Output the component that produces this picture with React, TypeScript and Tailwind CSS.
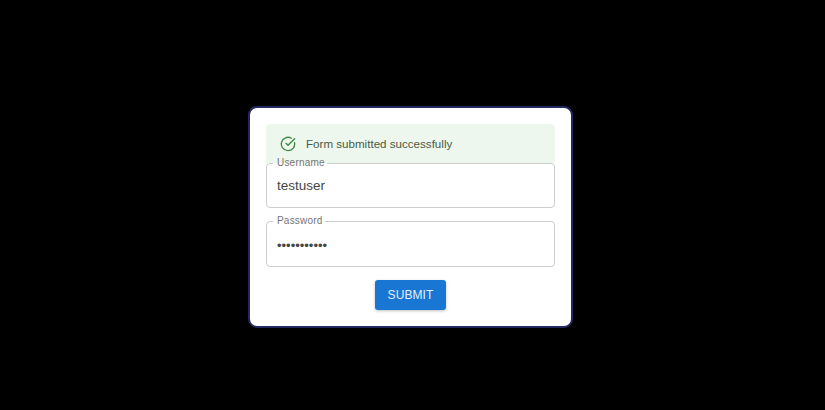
import { CircleCheckBig } from 'lucide-react';

function Field({ label, value, legendWidth, height, valueClass }: { label: string; value: string; legendWidth: string; height: string; valueClass: string }) {
  return (
    <fieldset className={`${height} rounded-[4px] border border-[#cdcdcd]`}>
      <legend className={`ml-[6px] h-[12px] ${legendWidth} px-[4px] text-[10px] leading-[11px] tracking-[0.2px] text-[#767676]`}>
        {label}
      </legend>
      <div className={`${valueClass} pl-[10px] leading-[27px] text-[#454545]`}>{value}</div>
    </fieldset>
  );
}

export default function App() {
  return (
    <div className="h-[410px] w-[825px] overflow-hidden bg-black pl-[248px] pt-[106px] font-['Liberation_Sans',sans-serif]">
      <div className="flex h-[222px] w-[325px] flex-col rounded-[9px] border-2 border-[#23295f] bg-white px-[16px] pt-[16px]">
        <div className="flex h-[39px] w-[289px] items-center rounded-t-[4px] bg-[#edf7ed] pl-[14px]">
          <CircleCheckBig size={16} strokeWidth={2} className="text-[#3f8a43]" />
          <span className="ml-[10px] text-[11.6px] text-[#4a5a46]">Form submitted successfully</span>
        </div>
        <div className="-mt-[6px] flex w-[289px] flex-col gap-[7px]">
          <Field label="Username" value="testuser" legendWidth="w-[54px]" height="h-[51px]" valueClass="mt-[3px] text-[13.5px]" />
          <Field label="Password" value="•••••••••••" legendWidth="w-[52px]" height="h-[52px]" valueClass="mt-[5px] text-[13px]" />
        </div>
        <div className="mt-[13px] flex w-[290px] justify-center">
          <button
            type="button"
            className="-ml-[1px] h-[30px] w-[71px] rounded-[3px] bg-[#1976d2] text-[12px] tracking-[0.1px] text-[#e4f0fb] shadow-[0_1px_3px_rgba(0,0,0,0.25)]"
          >
            SUBMIT
          </button>
        </div>
      </div>
    </div>
  );
}
